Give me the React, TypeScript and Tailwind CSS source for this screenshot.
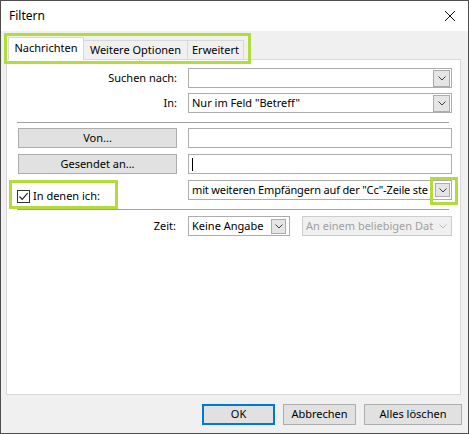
import React from "react";

const FONT = { fontFamily: '"Noto Sans", "Open Sans", sans-serif' };

function Chevron({ color = "#404040" }: { color?: string }) {
  return (
    <svg width="8" height="5" viewBox="0 0 8 5" fill="none">
      <path d="M0.5 0.5 L4 4 L7.5 0.5" stroke={color} strokeWidth="1" />
    </svg>
  );
}

function DropButton({ className }: { className: string }) {
  return (
    <div
      className={`flex shrink-0 items-center justify-center border border-[#acacac] bg-[#e5e5e5] ${className}`}
    >
      <Chevron />
    </div>
  );
}

function PushButton({ children }: { children: React.ReactNode }) {
  return (
    <button className="ml-px flex h-[20px] w-[159px] items-center justify-center border border-[#adadad] bg-[#e1e1e1] text-[11px] text-black">
      {children}
    </button>
  );
}

function Highlight({ className }: { className: string }) {
  return (
    <div
      className={`pointer-events-none absolute border-[3px] border-[#b2dc3c] ${className}`}
    />
  );
}

export default function App() {
  return (
    <div className="relative h-[434px] w-[469px] overflow-hidden" style={FONT}>
      <div className="flex h-full w-full flex-col border border-[#4d4d4d] text-[11px] text-black">
        {/* title bar */}
        <div className="flex h-[30px] items-center justify-between bg-white pl-[8px] pr-[13px]">
          <span className="text-[12px]">Filtern</span>
          <svg width="10" height="10" viewBox="0 0 10 10">
            <path d="M0 0 L10 10 M10 0 L0 10" stroke="#111" strokeWidth="1" />
          </svg>
        </div>

        {/* body */}
        <div className="flex flex-1 flex-col bg-[#f0f0f0] pt-[6px]">
          {/* tabs */}
          <div className="ml-[7px] flex h-[22px] items-end">
            <div className="relative z-10 -mb-px flex h-[23px] w-[76px] items-center justify-center border border-b-0 border-[#d9d9d9] bg-white pb-[2px]">
              Nachrichten
            </div>
            <div className="flex h-[19px] w-[104px] items-center justify-center border border-b-0 border-l-0 border-[#d9d9d9] bg-[#f0f0f0]">
              Weitere Optionen
            </div>
            <div className="flex h-[19px] w-[56px] items-center justify-center border border-b-0 border-l-0 border-[#d9d9d9] bg-[#f0f0f0]">
              Erweitert
            </div>
          </div>

          {/* panel */}
          <div className="ml-[5px] mr-[7px] flex h-[336px] flex-col border border-[#d9d9d9] bg-white pl-[10px] pt-[8px]">
            {/* Suchen nach */}
            <div className="flex h-[20px] gap-[11px]">
              <div className="flex w-[160px] items-center justify-end">Suchen nach:</div>
              <div className="flex w-[264px] items-center justify-end border border-[#adadad] bg-white">
                <DropButton className="mr-px h-[17px] w-[17px]" />
              </div>
            </div>

            {/* In */}
            <div className="mt-[5px] flex h-[20px] gap-[11px]">
              <div className="flex w-[160px] items-center justify-end">In:</div>
              <div className="flex w-[264px] items-center justify-between border border-[#adadad] bg-white pl-[3px]">
                <span>Nur im Feld "Betreff"</span>
                <DropButton className="mr-px h-[17px] w-[17px]" />
              </div>
            </div>

            <div className="mt-[9px] h-px w-[432px] bg-[#a0a0a0]" />

            {/* Von */}
            <div className="mt-[5px] flex h-[20px] gap-[11px]">
              <div className="w-[160px]">
                <PushButton>Von...</PushButton>
              </div>
              <div className="w-[264px] border border-[#adadad] bg-white" />
            </div>

            {/* Gesendet an */}
            <div className="mt-[6px] flex h-[20px] gap-[11px]">
              <div className="w-[160px]">
                <PushButton>Gesendet an...</PushButton>
              </div>
              <div className="flex w-[264px] items-center border border-[#adadad] bg-white pl-[3px]">
                <span className="h-[13px] w-px bg-black" />
              </div>
            </div>

            {/* In denen ich */}
            <div className="mt-[6px] flex h-[20px] gap-[11px]">
              <div className="w-[160px]">
                <label className="mt-[8px] flex items-center gap-[3px]">
                  <span className="flex h-[13px] w-[13px] items-center justify-center border border-[#333333] bg-white">
                    <svg width="11" height="11" viewBox="0 0 11 11" fill="none">
                      <path d="M1.5 5.5 L4.2 8.3 L9.6 2.2" stroke="#222" strokeWidth="1.2" />
                    </svg>
                  </span>
                  <span>In denen ich:</span>
                </label>
              </div>
              <div className="flex w-[264px] items-center border border-[#adadad] bg-white pl-[3px]">
                <span className="flex-1 whitespace-nowrap tracking-[-0.15px]">
                  mit weiteren Empfängern auf der "Cc"-Zeile ste
                </span>
                <DropButton className="ml-[2px] mr-px h-[14px] w-[15px]" />
              </div>
            </div>

            <div className="mt-[9px] h-px w-[432px] bg-[#a0a0a0]" />

            {/* Zeit */}
            <div className="mt-[6px] flex h-[20px] gap-[11px]">
              <div className="flex w-[160px] items-center justify-end pr-px">Zeit:</div>
              <div className="flex w-[102px] items-center justify-between border border-[#adadad] bg-white pl-[3px]">
                <span>Keine Angabe</span>
                <DropButton className="mr-[3px] h-[15px] w-[15px]" />
              </div>
              <div className="ml-px flex w-[150px] items-center border border-[#cccccc] bg-[#f0f0f0] pl-[3px]">
                <span className="flex-1 whitespace-nowrap text-[#a0a0a0]">
                  An einem beliebigen Dat
                </span>
                <div className="flex w-[17px] shrink-0 items-center justify-center">
                  <Chevron color="#bdbdbd" />
                </div>
              </div>
            </div>
          </div>

          {/* dialog buttons */}
          <div className="mr-[6px] mt-[9px] flex justify-end gap-[8px]">
            <button className="flex h-[21px] w-[73px] items-center justify-center border-2 border-[#0078d7] bg-[#e1e1e1]">
              OK
            </button>
            <button className="flex h-[21px] w-[73px] items-center justify-center border border-[#adadad] bg-[#e1e1e1]">
              Abbrechen
            </button>
            <button className="flex h-[21px] w-[98px] items-center justify-center border border-[#adadad] bg-[#e1e1e1]">
              Alles löschen
            </button>
          </div>
        </div>
      </div>

      {/* annotation boxes */}
      <Highlight className="left-[4px] top-[33px] h-[31px] w-[247px]" />
      <Highlight className="left-[9px] top-[180px] h-[29px] w-[109px]" />
      <Highlight className="left-[430px] top-[177px] h-[28px] w-[28px]" />
    </div>
  );
}
